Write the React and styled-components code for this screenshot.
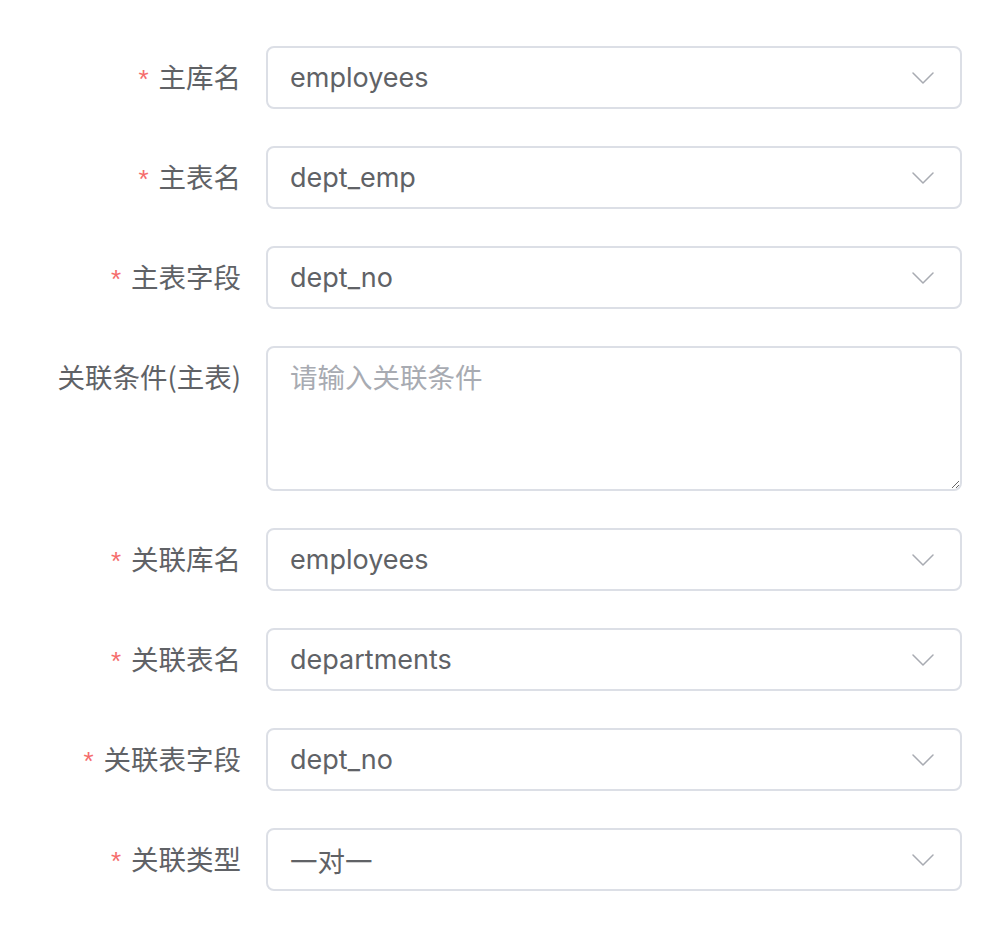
import styled, { createGlobalStyle } from "styled-components";

const GlobalStyle = createGlobalStyle`
	html, body {
		margin: 0;
		padding: 0;
		background: #fff;
	}
	body {
		font-family: Inter, "Liberation Sans", "Noto Sans CJK SC", sans-serif;
		color: #606266;
	}
`

const Form = styled.form`
	width: 990px;
	padding: 46px 28px 0 0;
	box-sizing: border-box;
	display: flex;
	flex-direction: column;
	gap: 37px;
`

const Row = styled.div`
	display: flex;
	align-items: ${(p) => (p.$top ? "flex-start" : "center")};
`

const Label = styled.label`
	width: 266px;
	flex-shrink: 0;
	box-sizing: border-box;
	padding-right: 25px;
	padding-top: ${(p) => (p.$top ? "11px" : "0")};
	text-align: right;
	font-family: "Noto Sans CJK SC", sans-serif;
	font-size: 27.5px;
	line-height: 38px;
	color: #606266;
	white-space: nowrap;
`

const Star = styled.span`
	color: #f56c6c;
	font-size: 26px;
	margin-right: 10px;
	font-family: "Liberation Sans", sans-serif;
`

const SelectBox = styled.div`
	flex: 1;
	height: 63px;
	box-sizing: border-box;
	border: 2px solid #dcdfe6;
	border-radius: 8px;
	padding: 0 26px 0 22px;
	display: flex;
	align-items: center;
	justify-content: space-between;
	background: #fff;
`

const Value = styled.span`
	font-size: ${(p) => (p.$cjk ? "27.5px" : "27px")};
	color: #606266;
	font-family: ${(p) => (p.$cjk ? '"Noto Sans CJK SC", sans-serif' : 'Inter, "Liberation Sans", sans-serif')};
`

const TextArea = styled.textarea`
	flex: 1;
	height: 145px;
	box-sizing: border-box;
	border: 2px solid #dcdfe6;
	border-radius: 8px;
	padding: 9px 22px;
	font-family: "Noto Sans CJK SC", sans-serif;
	font-size: 27.5px;
	line-height: 38px;
	color: #606266;
	resize: vertical;
	outline: none;

	&::placeholder {
		color: #a8abb2;
	}
`

function Chevron() {
	return (
		<svg width="22" height="12" viewBox="0 0 22 12" fill="none">
			<path d="M1 1l10 10L21 1" stroke="#a8abb2" strokeWidth="1.5" strokeLinecap="round" strokeLinejoin="round" />
		</svg>
	)
}

const selects = [
	{ label: "主库名", value: "employees" },
	{ label: "主表名", value: "dept_emp" },
	{ label: "主表字段", value: "dept_no" },
]

const relSelects = [
	{ label: "关联库名", value: "employees" },
	{ label: "关联表名", value: "departments" },
	{ label: "关联表字段", value: "dept_no" },
	{ label: "关联类型", value: "一对一", cjk: true },
]

function SelectRow({ label, value, cjk }) {
	return (
		<Row>
			<Label><Star>*</Star>{label}</Label>
			<SelectBox>
				<Value $cjk={cjk}>{value}</Value>
				<Chevron />
			</SelectBox>
		</Row>
	)
}

export default function App() {
	return (
		<>
			<GlobalStyle />
			<Form>
				{selects.map((s) => <SelectRow key={s.label} {...s} />)}
				<Row $top>
					<Label $top>关联条件(主表)</Label>
					<TextArea placeholder="请输入关联条件" />
				</Row>
				{relSelects.map((s) => <SelectRow key={s.label} {...s} />)}
			</Form>
		</>
	)
}
